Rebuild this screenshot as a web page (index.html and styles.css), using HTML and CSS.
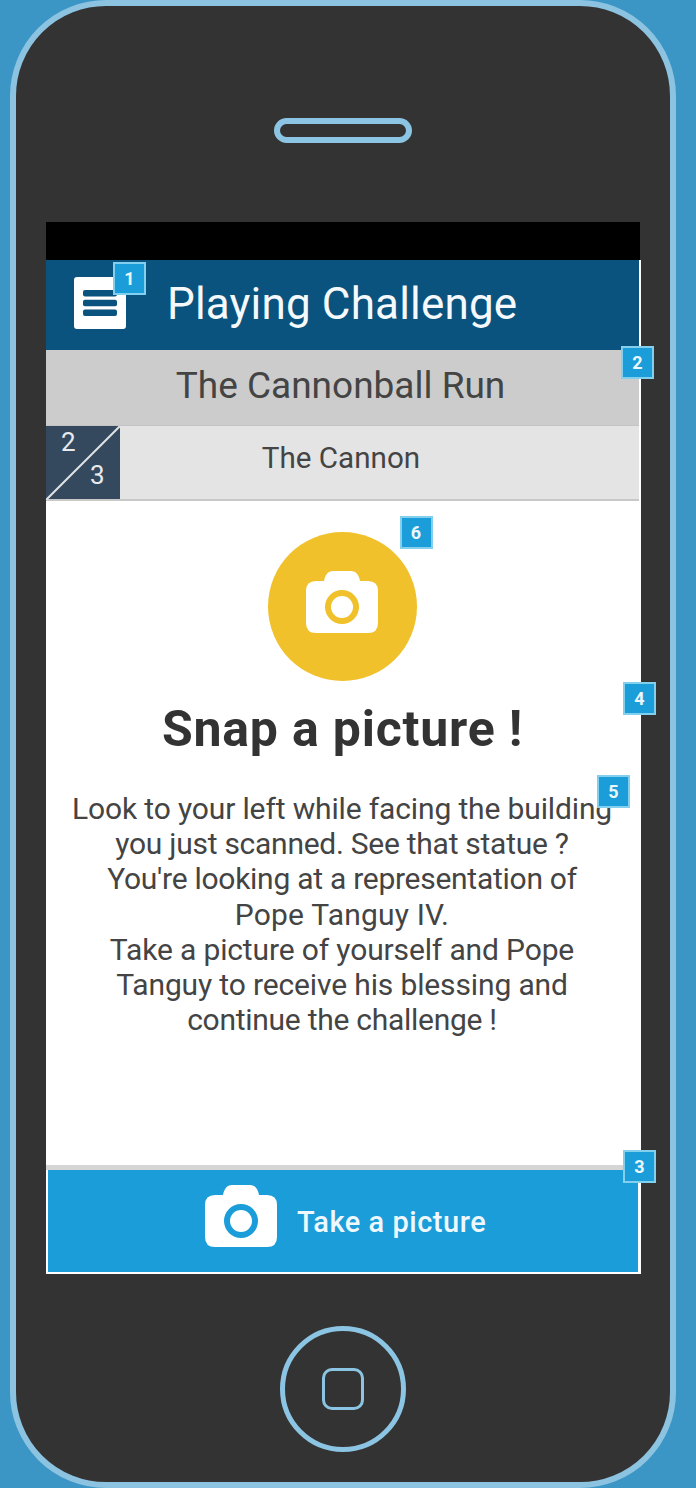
FILE: index.html
```html
<!DOCTYPE html>
<html lang="en">
<head>
<meta charset="utf-8">
<title>Playing Challenge</title>
<link rel="stylesheet" href="styles.css">
</head>
<body>
<svg class="defs" width="0" height="0" aria-hidden="true">
  <symbol id="camera" viewBox="0 0 72 63">
    <path fill="currentColor" fill-rule="evenodd" d="M10 11H18C19 5 22 1 27 1H45C50 1 53 5 54 11H62Q72 11 72 21V53Q72 63 62 63H10Q0 63 0 53V21Q0 11 10 11ZM36 20A17 17 0 1 0 36 54A17 17 0 1 0 36 20Z"/>
    <circle cx="36" cy="37" r="11" fill="currentColor"/>
  </symbol>
</svg>
<div class="phone">
  <div class="speaker"></div>
  <div class="statusbar"></div>
  <main class="screen">
    <header class="appbar">
      <div class="menu">
        <svg width="52" height="52" viewBox="0 0 52 52"><rect width="52" height="52" rx="3" fill="#fff"/><g fill="#09537e"><rect x="9" y="13" width="34" height="6.5" rx="2"/><rect x="9" y="22.8" width="34" height="6.5" rx="2"/><rect x="9" y="32.6" width="34" height="6.5" rx="2"/></g></svg>
        <span class="pin pin-1">1</span>
      </div>
      <h1 class="title"><span>Playing Challenge</span></h1>
    </header>
    <div class="challenge"><span>The Cannonball Run</span><span class="pin pin-2">2</span></div>
    <div class="step">
      <div class="progress">
        <svg class="slash" width="74" height="74" viewBox="0 0 74 74"><path d="M0 74L74 0" stroke="#e0e2e5" stroke-width="2"/></svg>
        <span class="current">2</span><span class="total">3</span>
      </div>
      <div class="step-name"><span>The Cannon</span></div>
    </div>
    <section class="task">
      <div class="badge"><svg class="camera" width="72" height="63"><use href="#camera"/></svg><span class="pin pin-6">6</span></div>
      <h2 class="heading"><span>Snap a picture !</span></h2>
      <p class="text"><span class="snug">Look to your left while facing the building</span><br><span class="tight">you just scanned. See that statue ?</span><br><span class="tight">You're looking at a representation of</span><br><span class="loose">Pope Tanguy IV.</span><br><span class="snug">Take a picture of yourself and Pope</span><br><span class="snug">Tanguy to receive his blessing and</span><br><span class="tight">continue the challenge !</span></p>
      <span class="pin pin-4">4</span>
      <span class="pin pin-5">5</span>
    </section>
    <div class="action">
      <svg class="camera" width="72" height="63"><use href="#camera"/></svg>
      <span class="action-label">Take a picture</span>
      <span class="pin pin-3">3</span>
    </div>
  </main>
  <div class="home"><div class="home-square"></div></div>
</div>
</body>
</html>
```
FILE: styles.css
```css
* { box-sizing: border-box; }
body { margin: 0; height: 1488px; overflow: hidden; background: #3b96c6; font-family: Roboto, "Liberation Sans", sans-serif; color: #444; }
.defs { position: absolute; }
svg { display: block; flex: none; }
.phone { width: 666px; height: 1488px; margin-left: 10px; background: #333; border: 6px solid #8cc3e1; border-radius: 96px; display: flex; flex-direction: column; align-items: flex-start; padding: 112px 0 0 30px; }
.speaker { width: 138px; height: 25px; margin-left: 228px; border: 6px solid #8cc5e3; border-radius: 13px; flex: none; }
.statusbar { width: 594px; height: 38px; margin-top: 79px; background: #000; flex: none; }
.screen { width: 595px; height: 1014px; flex: none; display: flex; flex-direction: column; background: #fff; }
.appbar { height: 90px; margin-right: 2px; background: #09537e; display: flex; align-items: center; padding-left: 28px; flex: none; }
.menu { position: relative; margin-top: -4px; }
.title { margin: -3px 0 0 41px; font-size: 44px; font-weight: 400; line-height: 52px; letter-spacing: 0.17px; color: #f5f9fc; white-space: nowrap; }
.challenge { position: relative; height: 76px; margin-right: 2px; background: #ccc; border-bottom: 1px solid #c4c4c4; text-align: center; font-size: 37px; line-height: 72px; padding-right: 4px; flex: none; }
.step { height: 75px; margin-right: 2px; background: #e4e4e4; display: flex; border-bottom: 2px solid #c8c8c8; flex: none; }
.progress { position: relative; width: 74px; background: #34495e; color: #e8ebee; font-size: 26px; line-height: 30px; }
.slash, .current, .total { position: absolute; }
.slash { left: 0; top: 0; }
.current { left: 15px; top: 1px; }
.total { left: 44px; top: 34px; }
.step-name { flex: 1; padding-right: 77px; text-align: center; font-size: 29.6px; line-height: 65px; }
.task { position: relative; height: 669px; display: flex; flex-direction: column; align-items: center; padding-top: 31px; border-bottom: 5px solid #d5d5d5; flex: none; }
.badge { position: relative; width: 149px; height: 149px; margin-right: 3px; border-radius: 50%; background: #f0c12b; color: #fff; display: flex; align-items: center; justify-content: center; padding: 0 1px 10px 0; }
.heading { margin: 18px 0 0; padding-right: 2px; font-size: 50px; line-height: 60px; font-weight: 700; letter-spacing: 0.8px; color: #333; white-space: nowrap; }
.text { margin: 32px 0 0; padding-right: 3px; text-align: center; font-size: 30px; line-height: 35.2px; white-space: nowrap; }
.snug { letter-spacing: -0.14px; }
.tight { letter-spacing: -0.27px; }
.loose { letter-spacing: 0.2px; }
.action { position: relative; height: 102px; margin: 0 3px 0 2px; background: #1b9dd9; color: #fff; display: flex; align-items: center; padding: 0 0 12px 157px; flex: none; }
.action-label { margin: 14px 0 0 20px; font-size: 29px; font-weight: 500; line-height: 36px; letter-spacing: 0.52px; color: #eef8fd; white-space: nowrap; }
.pin { position: absolute; width: 33px; height: 33px; background: #1b9dd9; border: 2px solid #83cfee; color: #eaf7fd; font-size: 18px; line-height: 30px; font-weight: 700; letter-spacing: 0; text-align: center; }
.pin-1 { left: 39px; top: -15px; }
.pin-2 { left: 575px; top: -4px; }
.pin-3 { left: 575px; top: -20px; }
.pin-4 { left: 577px; top: 181px; }
.pin-5 { left: 551px; top: 274px; }
.pin-6 { left: 132px; top: -16px; }
.home { width: 126px; height: 126px; margin: 52px 0 0 234px; border: 5px solid #8cc5e3; border-radius: 50%; display: flex; align-items: center; justify-content: center; flex: none; }
.home-square { width: 42px; height: 42px; border: 3px solid #8cc5e3; border-radius: 10px; }
```
